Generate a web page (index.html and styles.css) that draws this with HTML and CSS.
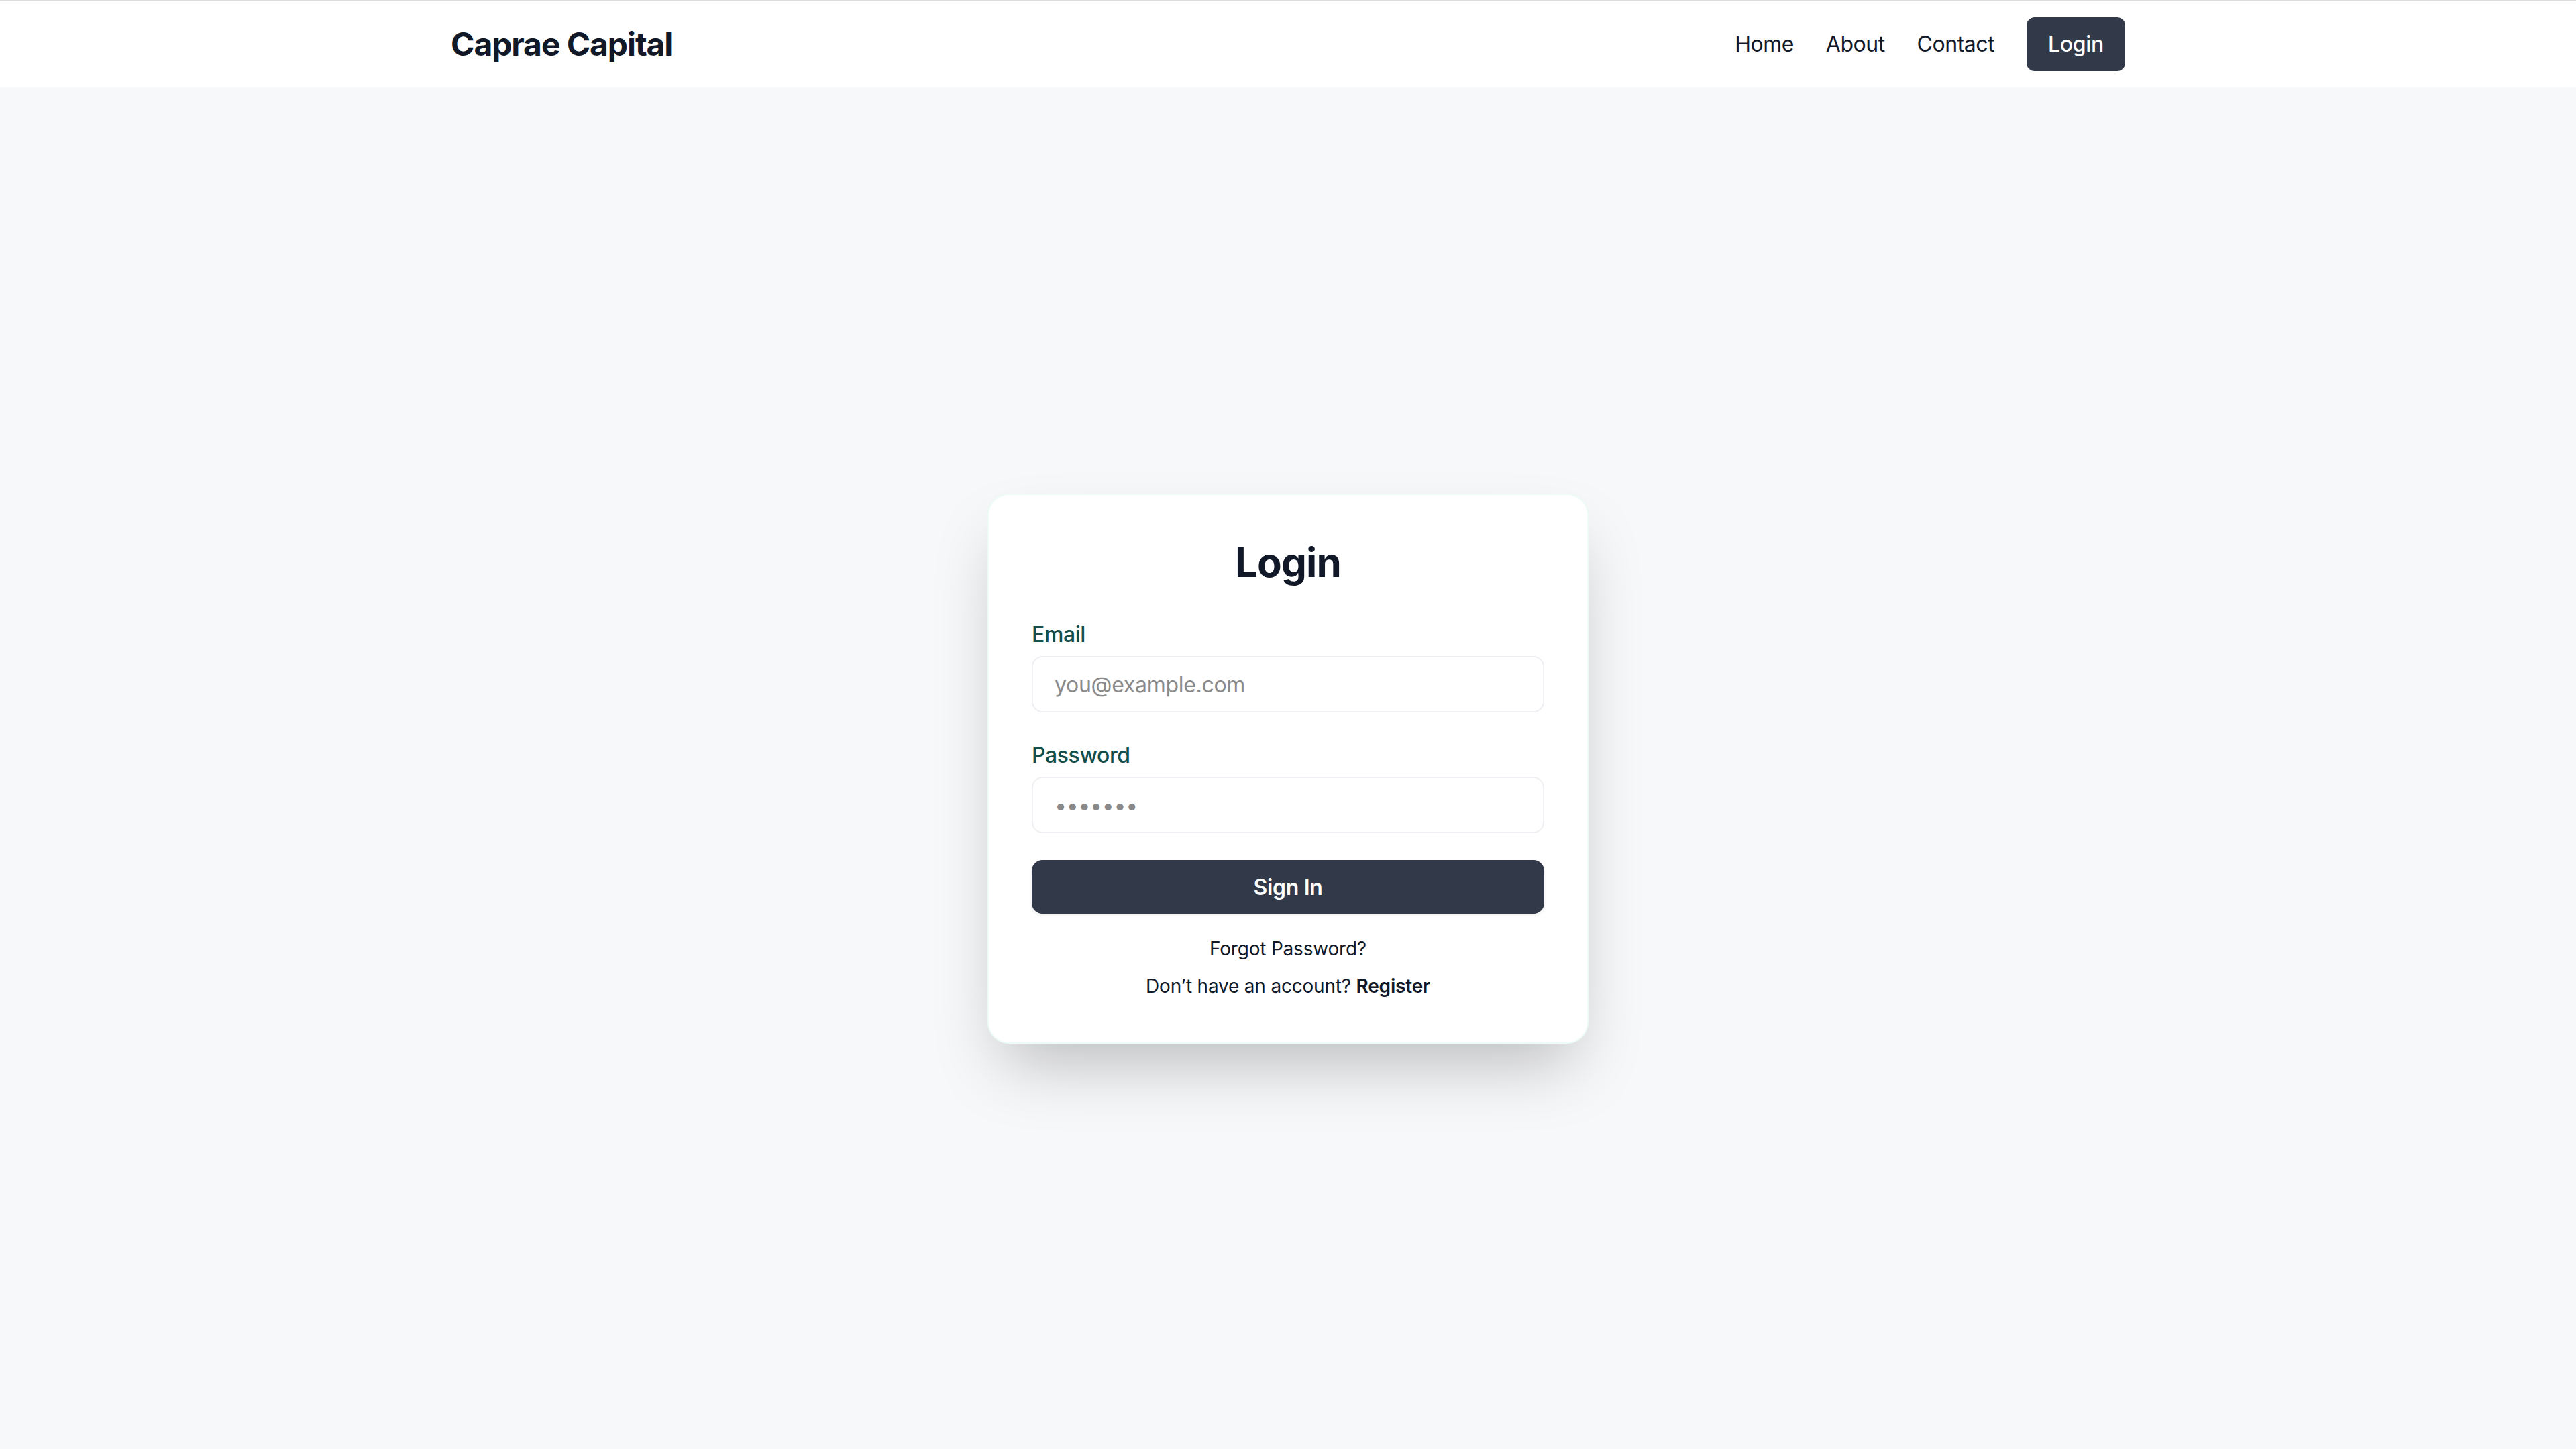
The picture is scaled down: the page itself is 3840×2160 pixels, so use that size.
FILE: index.html
```html
<!DOCTYPE html>
<html lang="en">
<head>
<meta charset="utf-8">
<title>Login - Caprae Capital</title>
<link rel="stylesheet" href="styles.css">
</head>
<body>
<div class="page">
  <header class="site-header">
    <div class="container header-inner">
      <a class="brand" href="#">Caprae Capital</a>
      <nav class="nav">
        <a class="nav-link" href="#">Home</a>
        <a class="nav-link" href="#">About</a>
        <a class="nav-link" href="#">Contact</a>
        <a class="nav-button" href="#">Login</a>
      </nav>
    </div>
  </header>
  <main class="main">
    <div class="card">
      <h1 class="card-title">Login</h1>
      <form class="form">
        <div class="field">
          <label class="label" for="email">Email</label>
          <input class="input" id="email" type="email" placeholder="you@example.com">
        </div>
        <div class="field">
          <label class="label" for="password">Password</label>
          <input class="input" id="password" type="password" placeholder="•••••••">
        </div>
        <button class="submit" type="button">Sign In</button>
      </form>
      <p class="aux first"><a href="#" class="aux-link">Forgot Password?</a></p>
      <p class="aux">Don’t have an account? <a href="#" class="aux-strong">Register</a></p>
    </div>
  </main>
</div>
</body>
</html>
```
FILE: styles.css
```css
* { box-sizing: border-box; }

html, body {
  margin: 0;
  padding: 0;
}

body {
  font-family: Inter, "Noto Sans", "Liberation Sans", sans-serif;
  color: #111827;
  background: #f7f8fa;
}

a { text-decoration: none; color: inherit; }

.page {
  min-height: 2160px;
  display: flex;
  flex-direction: column;
}

.site-header {
  background: #ffffff;
  border-top: 2px solid #dcdcdc;
}

.container {
  max-width: 2560px;
  margin: 0 auto;
  padding: 0 32px;
}

.header-inner {
  height: 128px;
  display: flex;
  align-items: center;
  justify-content: space-between;
}

.brand {
  font-size: 48px;
  line-height: 64px;
  font-weight: 700;
  letter-spacing: -1.1px;
  color: #111827;
}

.nav {
  display: flex;
  align-items: center;
  gap: 48px;
}

.nav-link {
  font-size: 32px;
  line-height: 48px;
  letter-spacing: -0.5px;
  color: #111827;
}

.nav-button {
  font-size: 32px;
  line-height: 48px;
  font-weight: 500;
  letter-spacing: -0.3px;
  color: #ffffff;
  background: #323a49;
  padding: 16px 32px;
  border-radius: 12px;
}

.main {
  flex: 1;
  display: flex;
  align-items: center;
  justify-content: center;
  padding-top: 2px;
}

.card {
  width: 896px;
  background: #ffffff;
  border: 2px solid #ecfbf5;
  border-radius: 32px;
  padding: 64px;
  box-shadow: 0 50px 100px -24px rgba(0, 0, 0, 0.25);
}

.card-title {
  margin: 0 0 48px;
  font-size: 60px;
  line-height: 72px;
  font-weight: 700;
  letter-spacing: -0.8px;
  text-align: center;
  color: #111827;
}

.form {
  display: flex;
  flex-direction: column;
  gap: 40px;
}

.field {
  display: flex;
  flex-direction: column;
  gap: 8px;
}

.label {
  font-size: 32px;
  line-height: 48px;
  font-weight: 500;
  letter-spacing: -0.4px;
  color: #134e4a;
}

.input {
  width: 100%;
  height: 84px;
  padding: 16px 32px;
  font-family: inherit;
  font-size: 32px;
  line-height: 48px;
  color: #111827;
  background: #ffffff;
  border: 2px solid #eeeff3;
  border-radius: 16px;
  outline: none;
}

.input::placeholder {
  color: #8a8a8a;
  letter-spacing: -0.3px;
}

.submit {
  height: 80px;
  width: 100%;
  border: none;
  border-radius: 16px;
  background: #323a49;
  color: #ffffff;
  font-family: inherit;
  font-size: 32px;
  font-weight: 600;
  letter-spacing: -0.3px;
  box-shadow: 0 2px 4px rgba(0, 0, 0, 0.08);
}

.aux {
  margin: 16px 0 0;
  font-size: 28px;
  line-height: 40px;
  letter-spacing: -0.2px;
  text-align: center;
  color: #111827;
}

.aux.first { margin-top: 32px; }

.aux-strong { font-weight: 600; }
```
